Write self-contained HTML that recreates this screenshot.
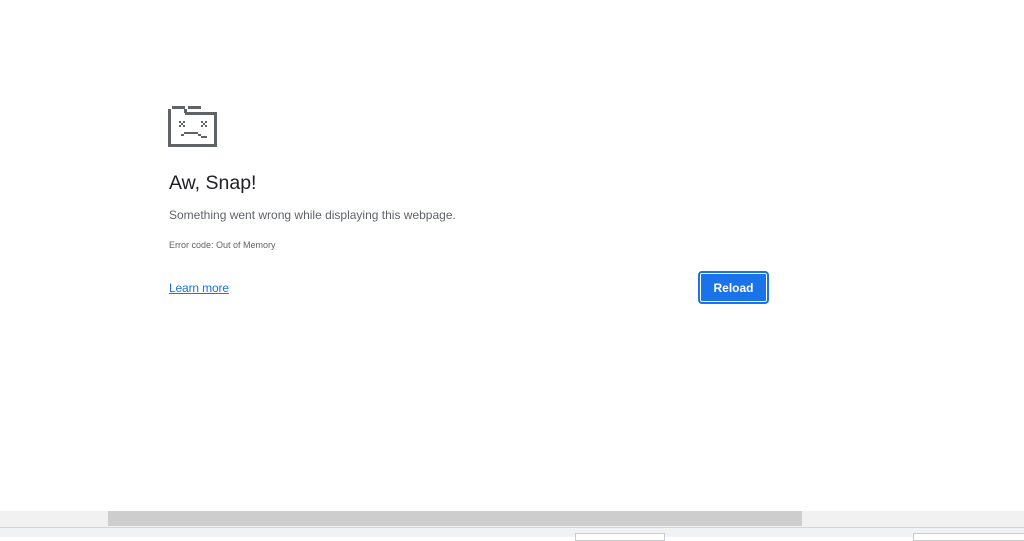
<!DOCTYPE html>
<html><head><style>
body{margin:0;width:1024px;height:537px;background:#fff;position:relative;overflow:hidden;font-family:"Liberation Sans",sans-serif}
.a{position:absolute;white-space:nowrap}
</style></head><body>
<svg class="a" style="left:160px;top:95px" width="70" height="60" viewBox="0 0 70 60">
<g fill="#5f6368">
<rect x="12" y="11" width="13" height="3"/><rect x="28" y="11" width="13" height="3"/>
<rect x="8" y="14" width="3" height="38"/>
<rect x="25" y="17" width="32" height="3"/>
<rect x="24" y="14" width="3" height="4"/>
<rect x="54" y="20" width="3" height="32"/>
<rect x="8" y="49" width="49" height="3"/>
<rect x="19" y="26" width="2" height="2"/><rect x="23" y="26" width="2" height="2"/><rect x="21" y="28" width="2" height="2"/><rect x="19" y="30" width="2" height="2"/><rect x="23" y="30" width="2" height="2"/>
<rect x="41" y="26" width="2" height="2"/><rect x="45" y="26" width="2" height="2"/><rect x="43" y="28" width="2" height="2"/><rect x="41" y="30" width="2" height="2"/><rect x="45" y="30" width="2" height="2"/>
<rect x="21" y="39" width="3" height="2"/><rect x="24" y="37" width="14" height="2"/><rect x="38" y="39" width="3" height="2"/><rect x="41" y="41" width="6" height="2"/>
</g></svg>
<div class="a" style="left:169px;top:172px;font-size:19.5px;color:#202124">Aw, Snap!</div>
<div class="a" style="left:169px;top:208px;font-size:12px;color:#5f6368">Something went wrong while displaying this webpage.</div>
<div class="a" style="left:169px;top:240px;font-size:9px;color:#5f6368">Error code: Out of Memory</div>
<div class="a" style="left:169px;top:281px;font-size:12px;color:#1a73e8;text-decoration:underline;letter-spacing:-0.15px">Learn more</div>
<div class="a" style="left:698px;top:271px;width:67px;height:29px;border:2px solid #1a73e8;border-radius:4px;box-shadow:inset 0 0 0 1px #fff;background:#1a73e8;color:#fff;font-size:12px;font-weight:bold;text-align:center;line-height:31px">Reload</div>
<div class="a" style="left:0;top:511px;width:1024px;height:16px;background:#f1f1f1"></div>
<div class="a" style="left:108px;top:511px;width:694px;height:15px;background:#cdcdcd"></div>
<div class="a" style="left:0;top:527px;width:1024px;height:1px;background:#d3d5da"></div>
<div class="a" style="left:0;top:528px;width:1024px;height:9px;background:#f1f2f6"></div>
<div class="a" style="left:575px;top:533px;width:88px;height:6px;border:1px solid #c8cbd0;background:#fff"></div>
<div class="a" style="left:913px;top:533px;width:120px;height:6px;border:1px solid #c8cbd0;background:#fff"></div>
</body></html>
